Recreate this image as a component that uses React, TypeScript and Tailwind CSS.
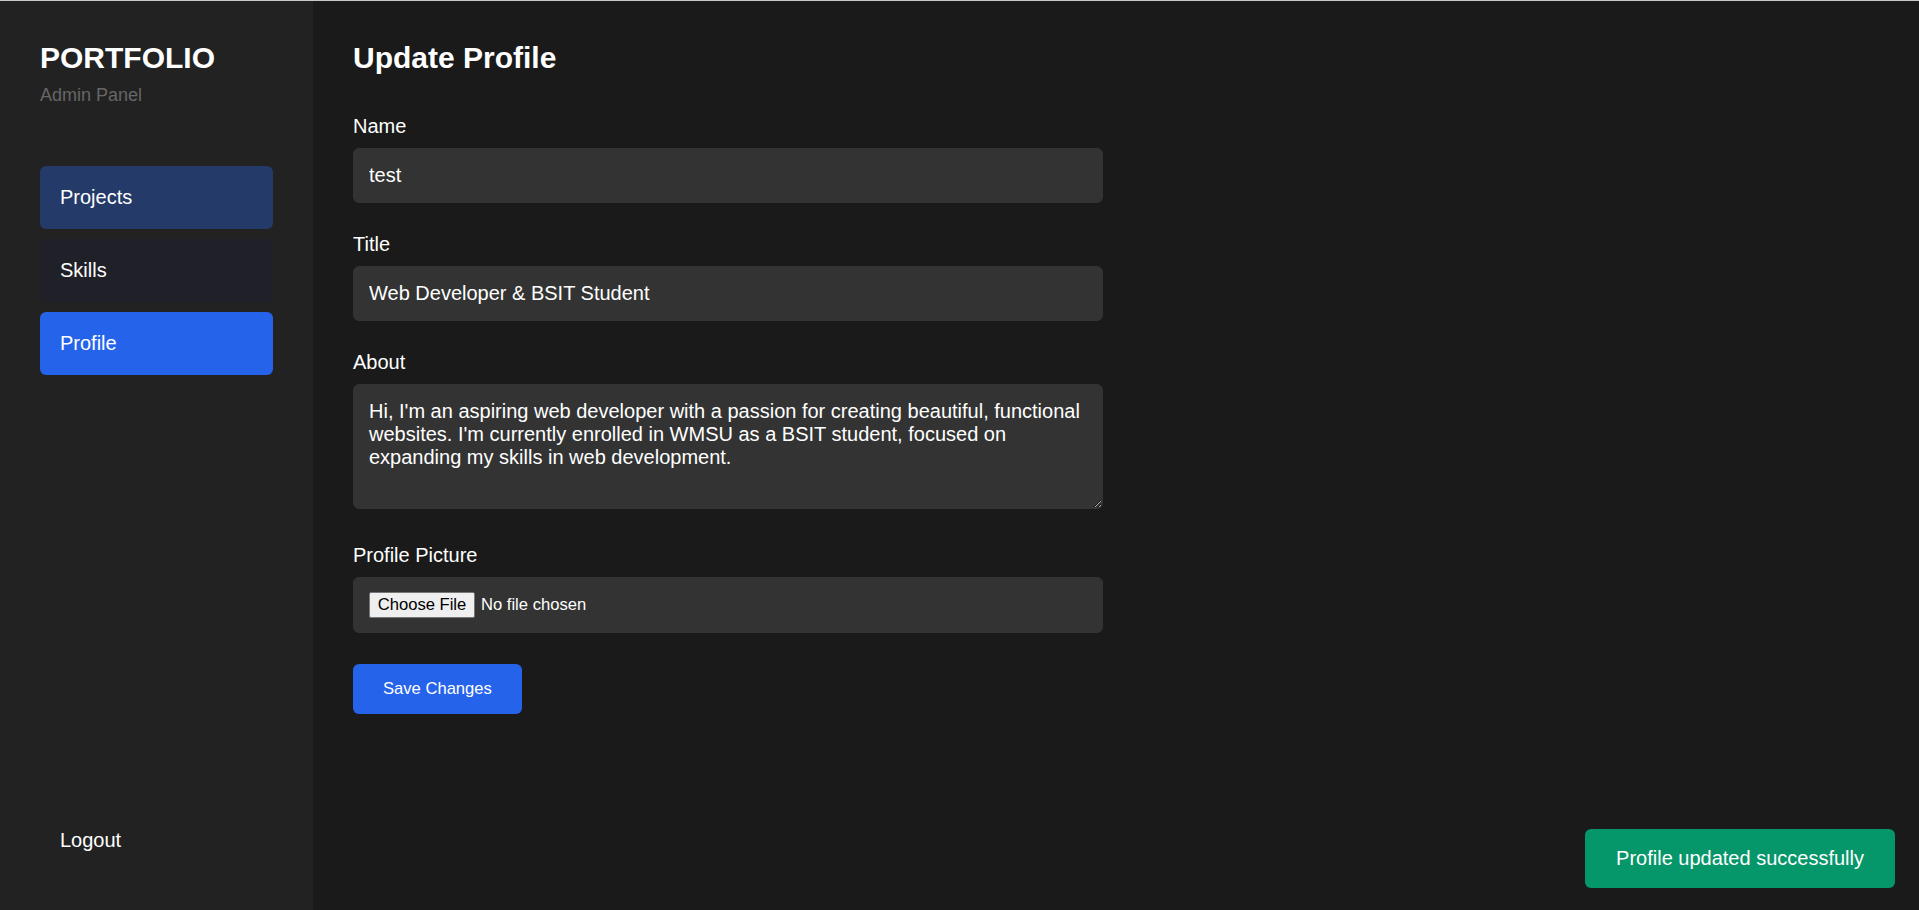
const navItems = [
  { label: "Projects", cls: "bg-[#243a69]" },
  { label: "Skills", cls: "bg-[#202128]" },
  { label: "Profile", cls: "bg-[#2563eb]" },
];

const about =
  "Hi, I'm an aspiring web developer with a passion for creating beautiful, functional websites. I'm currently enrolled in WMSU as a BSIT student, focused on expanding my skills in web development.";

const App = () => {
  return (
    <div className="flex h-screen w-full border-t border-[#c9c9c9] bg-[#1a1a1a] font-['Liberation_Sans',Arial,sans-serif] text-white">
      {/* sidebar */}
      <aside className="flex w-[313px] shrink-0 flex-col justify-between bg-[#222222] px-10 pb-[38px] pt-10">
        <div>
          <div className="mb-[60px]">
            <h1 className="text-[30px] font-bold leading-[34px]">PORTFOLIO</h1>
            <p className="mt-[10px] text-[18px] leading-[21px] text-[#666666]">Admin Panel</p>
          </div>
          <nav className="flex flex-col gap-[10px]">
            {navItems.map((item) => (
              <div
                key={item.label}
                className={`rounded-[6px] px-5 py-5 text-[20px] leading-[23px] ${item.cls}`}
              >
                {item.label}
              </div>
            ))}
          </nav>
        </div>
        <div className="rounded-[6px] px-5 py-5 text-[20px] leading-[23px]">Logout</div>
      </aside>

      {/* main */}
      <main className="flex-1 p-10">
        <h2 className="mb-10 text-[30px] font-bold leading-[34px]">Update Profile</h2>
        <form className="w-[750px]" onSubmit={(e) => e.preventDefault()}>
          <div className="mb-[30px]">
            <label className="mb-[10px] block text-[20px] leading-[23px]">Name</label>
            <input
              defaultValue="test"
              className="block w-full rounded-[6px] border border-[#333333] bg-[#333333] px-[15px] py-[15px] text-[20px] leading-[23px] text-white outline-none"
            />
          </div>
          <div className="mb-[30px]">
            <label className="mb-[10px] block text-[20px] leading-[23px]">Title</label>
            <input
              defaultValue="Web Developer & BSIT Student"
              className="block w-full rounded-[6px] border border-[#333333] bg-[#333333] px-[15px] py-[15px] text-[20px] leading-[23px] text-white outline-none"
            />
          </div>
          <div className="mb-[35px]">
            <label className="mb-[10px] block text-[20px] leading-[23px]">About</label>
            <textarea
              defaultValue={about}
              rows={4}
              className="block h-[125px] w-full rounded-[6px] border border-[#333333] bg-[#333333] px-[15px] py-[15px] text-[20px] leading-[23px] text-white outline-none"
            />
          </div>
          <div className="mb-[31px]">
            <label className="mb-[10px] block text-[20px] leading-[23px]">Profile Picture</label>
            <div className="flex items-center rounded-[6px] border border-[#333333] bg-[#333333] px-[15px] pb-[14px] pt-[14px]">
              <span className="flex h-[26px] w-[106px] items-center justify-center rounded-[2px] border border-[#767676] bg-[#efefef] text-[16.6px] text-black">
                Choose File
              </span>
              <span className="ml-[6px] text-[16.6px]">No file chosen</span>
            </div>
          </div>
          <button
            type="submit"
            className="rounded-[6px] bg-[#2563eb] px-[30px] py-[15px] text-[16.6px] leading-[20px] text-white"
          >
            Save Changes
          </button>
        </form>
      </main>

      {/* toast */}
      <div className="fixed bottom-[22px] right-[24px] rounded-[6px] bg-[#059669] px-[31px] py-[18px] text-[20px] leading-[23px] text-white">
        Profile updated successfully
      </div>
    </div>
  );
};

export default App;
